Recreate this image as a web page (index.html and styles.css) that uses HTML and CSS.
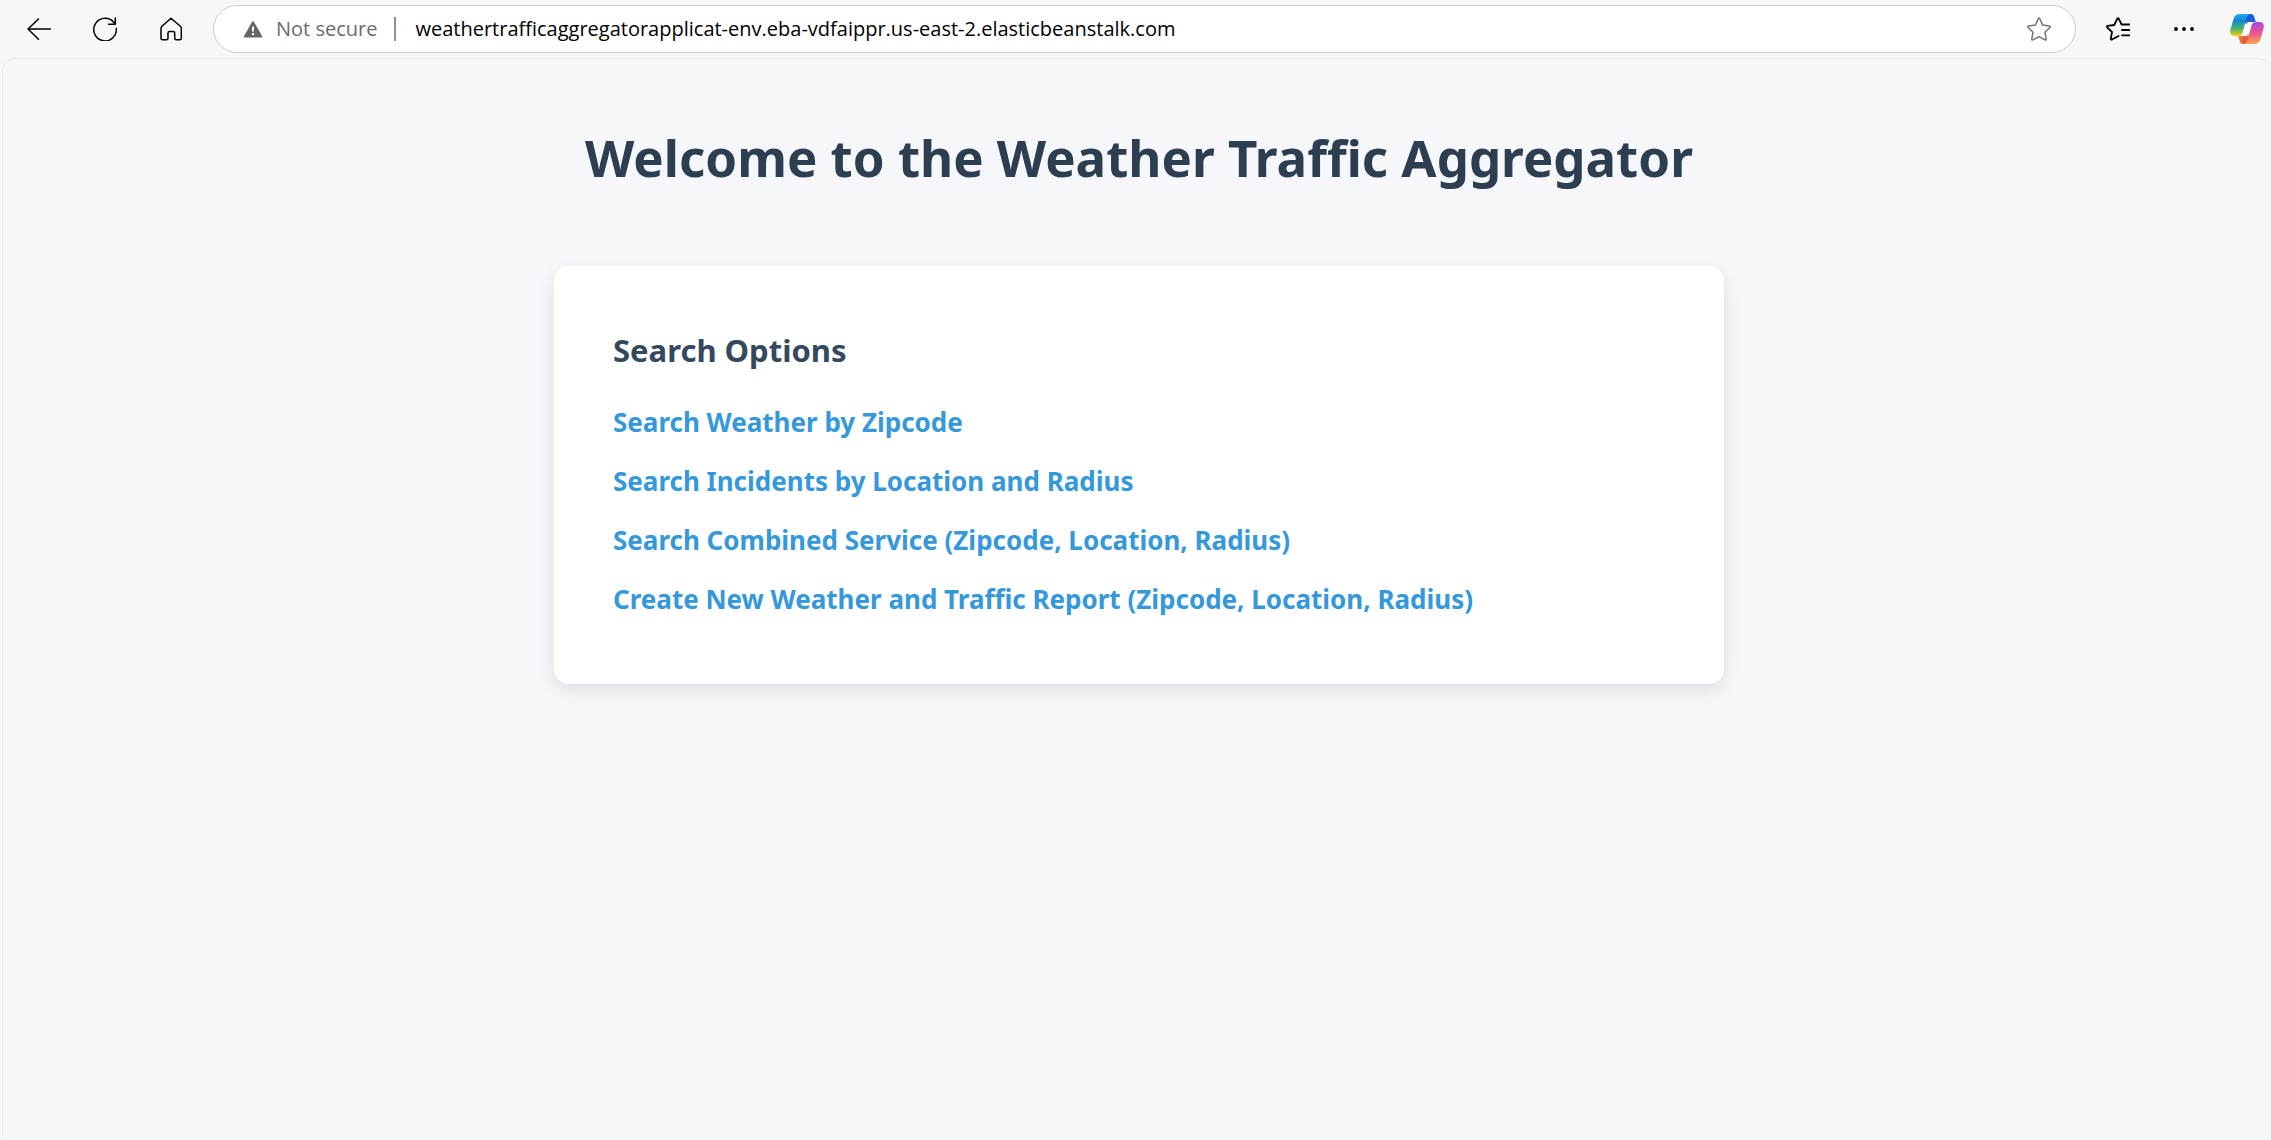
FILE: index.html
```html
<!DOCTYPE html>
<html lang="en">
<head>
<meta charset="utf-8">
<meta name="viewport" content="width=device-width, initial-scale=1">
<title>Weather Traffic Aggregator</title>
<link rel="stylesheet" href="styles.css">
</head>
<body>
<header class="toolbar">
  <button class="tool" type="button" aria-label="Back">
    <svg class="icon" viewBox="0 0 24 24"><path d="M11.500 2 1 12 11.500 22.200M1 12H23.500"/></svg>
  </button>
  <button class="tool" type="button" aria-label="Refresh">
    <svg class="icon" viewBox="0 0 24 24"><path d="M23.300 11.200A11.300 11.300 0 1 1 21.200 5.900M22.300 1V7.200H15.600"/></svg>
  </button>
  <button class="tool" type="button" aria-label="Home">
    <svg class="icon" viewBox="0 0 24 24"><path d="M12 1.200 21.600 9.500Q22.300 10.200 22.300 11.200V21.300Q22.300 22.800 20.800 22.800H17.200Q15.700 22.800 15.700 21.300V16Q15.700 14.500 14.200 14.500H10.500Q9 14.500 9 16V21.300Q9 22.800 7.500 22.800H3.500Q2 22.800 2 21.300V11.200Q2 10.200 2.700 9.500Z"/></svg>
  </button>
  <form class="address">
    <svg class="warning" viewBox="0 0 20 18"><path fill="#666" d="M10 1.500Q10.500 1 11 2L19.300 16.500Q19.500 17.500 18.500 17.500H1.500Q.5 17.500 .8 16.500L9 2Q9.500 1 10 1.500Z"/><path fill="#fff" d="M9 6.500h2v5H9zM9 13h2v2.200H9z"/></svg>
    <label class="security" for="url">Not secure</label>
    <span class="divider"></span>
    <input class="url" id="url" type="text" value="weathertrafficaggregatorapplicat-env.eba-vdfaippr.us-east-2.elasticbeanstalk.com" spellcheck="false">
    <button class="star" type="button" aria-label="Add to favorites">
      <svg class="icon" viewBox="0 0 24 24"><path d="M11.200 1.800Q12 .3 12.800 1.800L15.600 8.100 22.300 9Q24 9.300 22.800 10.500L18 15.200 19.200 21.900Q19.400 23.500 18 22.800L12 19.600 6 22.800Q4.600 23.500 4.800 21.900L6 15.200 1.200 10.500Q0 9.300 1.700 9L8.400 8.100Z"/></svg>
    </button>
  </form>
  <button class="tool" type="button" aria-label="Favorites">
    <svg class="icon icon-bold" viewBox="0 0 24 24"><path d="M12.500 19 6 22.500Q4.600 23.200 4.800 21.600L6 15 1.200 10.300Q.2 9.100 1.700 8.900L8.200 8 11.200 1.800Q12 .6 12.800 1.800L15.600 7.500H23.500M16 13H23.500M16 18.300H23.500"/></svg>
  </button>
  <button class="tool" type="button" aria-label="Settings and more">
    <svg class="icon dots" viewBox="0 0 24 24"><circle cx="4" cy="12" r="1.900"/><circle cx="12" cy="12" r="1.900"/><circle cx="20" cy="12" r="1.900"/></svg>
  </button>
  <button class="tool copilot" type="button" aria-label="Copilot">
    <svg class="logo" viewBox="0 0 34 30">
      <defs>
        <linearGradient id="left" x1="0" y1="0" x2="0" y2="1"><stop offset="0" stop-color="#22a9ee"/><stop offset=".3" stop-color="#1385d5"/><stop offset=".65" stop-color="#48b46b"/><stop offset="1" stop-color="#f4cf0a"/></linearGradient>
        <linearGradient id="right" x1="0" y1="0" x2="0" y2="1"><stop offset="0" stop-color="#a14bea"/><stop offset=".5" stop-color="#ec5590"/><stop offset="1" stop-color="#ffa653"/></linearGradient>
        <linearGradient id="top" x1="0" y1="0" x2="1" y2="1"><stop offset="0" stop-color="#1b4fc4"/><stop offset="1" stop-color="#1b6fe4"/></linearGradient>
        <linearGradient id="bottom" x1="0" y1="0" x2="1" y2="1"><stop offset="0" stop-color="#f58b3e"/><stop offset="1" stop-color="#e2432b"/></linearGradient>
      </defs>
      <path fill="url(#top)" d="M17 0H20.500Q23.500 0 24.300 3L25.800 8H21Q17.500 8 16.500 11L14 6Z"/>
      <path fill="url(#bottom)" d="M17 30H13.500Q10.500 30 9.700 27L8.200 22H13Q16.500 22 17.500 19L20 24Z"/>
      <path fill="#fff" d="M17.500 8H24L17 22H11Z"/>
      <path fill="url(#left)" d="M9.500 0H20Q17.300 .8 16.500 4L12.500 18.500Q11.500 22 8 22H5Q-1 22 .5 15.500L3.500 5Q5 0 9.500 0Z"/>
      <path fill="url(#right)" d="M24.500 30H14Q16.700 29.200 17.500 26L21.500 11.500Q22.500 8 26 8H29Q35 8 33.500 14.500L30.500 25Q29 30 24.500 30Z"/>
    </svg>
  </button>
</header>
<main class="page">
  <h1 class="title">Welcome to the Weather Traffic Aggregator</h1>
  <section class="card">
    <h2 class="subtitle">Search Options</h2>
    <ul class="options">
      <li><a class="link" href="#weather">Search Weather by Zipcode</a></li>
      <li><a class="link" href="#incidents">Search Incidents by Location and Radius</a></li>
      <li><a class="link" href="#combined">Search Combined Service (Zipcode, Location, Radius)</a></li>
      <li><a class="link" href="#report">Create New Weather and Traffic Report (Zipcode, Location, Radius)</a></li>
    </ul>
  </section>
</main>
</body>
</html>
```
FILE: styles.css
```css
* {
  box-sizing: border-box;
}

body {
  margin: 0;
  min-height: 100vh;
  display: flex;
  flex-direction: column;
  background: #f7f7f7;
  font-family: "Noto Sans", "Segoe UI", sans-serif;
}

/* Browser toolbar */
.toolbar {
  display: flex;
  align-items: center;
  height: 58px;
  padding-left: 6px;
}

button {
  border: 0;
  padding: 0;
  background: none;
  color: inherit;
}

.tool {
  display: flex;
  flex: none;
  align-items: center;
  justify-content: center;
  width: 66px;
  height: 48px;
  color: #000;
}

.icon {
  display: block;
  width: 24px;
  height: 24px;
  fill: none;
  stroke: currentColor;
  stroke-width: 1.5;
  stroke-linecap: round;
  stroke-linejoin: round;
}

.icon-bold {
  stroke-width: 1.8;
}

.dots {
  fill: currentColor;
  stroke: none;
}

.copilot {
  width: 54px;
  justify-content: flex-end;
  padding-right: 7px;
}

.logo {
  width: 34px;
  height: 30px;
}

.address {
  display: flex;
  flex: 1;
  align-items: center;
  min-width: 0;
  height: 48px;
  margin: 0 9px;
  padding: 0 24px 0 29px;
  border: 1px solid #cdcdcd;
  border-radius: 24px;
  background: #fff;
  font: 20px/30px "Open Sans", "Segoe UI", sans-serif;
}

.warning {
  flex: none;
  width: 20px;
  height: 18px;
}

.security {
  flex: none;
  margin-left: 13px;
  color: #6b6b6b;
}

.divider {
  flex: none;
  width: 2px;
  height: 24px;
  margin: 0 19px 0 17px;
  background: #919191;
}

.url {
  flex: 1;
  min-width: 0;
  height: 30px;
  padding: 0;
  border: 0;
  outline: 0;
  background: none;
  color: #000;
  font: inherit;
}

.star {
  flex: none;
  color: #767676;
}

/* Page */
.page {
  flex: 1;
  margin-left: 2px;
  padding: 63px 20px 40px 24px;
  border: 1px solid #e6e7ea;
  border-width: 1px 0 0 1px;
  border-radius: 14px 14px 0 4px;
  background: #f5f7fb;
}

.title {
  margin: 0 0 74px;
  color: #2c3e50;
  font-size: 51px;
  line-height: 70px;
  text-align: center;
}

.card {
  max-width: 1170px;
  margin: 0 auto;
  padding: 59px 59px 67px;
  border-radius: 15px;
  background: #fff;
  box-shadow: 0 6px 18px rgba(0, 0, 0, 0.1);
}

.subtitle {
  margin: 0 0 29px;
  color: #34495e;
  font-size: 31px;
  line-height: 50px;
}

.options {
  display: grid;
  gap: 23px;
  margin: 0;
  padding: 0;
  list-style: none;
  font-size: 26px;
  line-height: 36px;
}

.link {
  display: block;
  color: #3498db;
  font-weight: 700;
  text-decoration: none;
}
```
